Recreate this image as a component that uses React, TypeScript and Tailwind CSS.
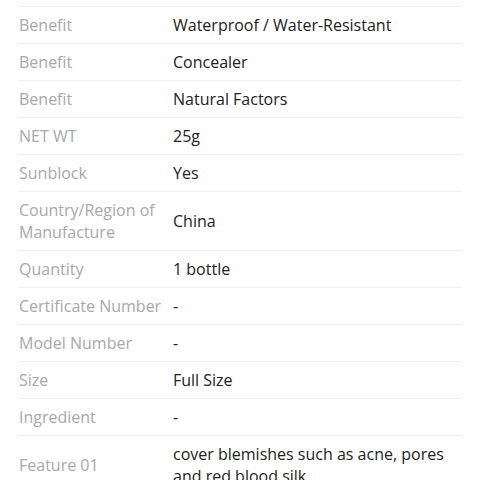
const specs: [string, string][] = [
  ["Benefit", "Waterproof / Water-Resistant"],
  ["Benefit", "Concealer"],
  ["Benefit", "Natural Factors"],
  ["NET WT", "25g"],
  ["Sunblock", "Yes"],
  ["Country/Region of Manufacture", "China"],
  ["Quantity", "1 bottle"],
  ["Certificate Number", "-"],
  ["Model Number", "-"],
  ["Size", "Full Size"],
  ["Ingredient", "-"],
  ["Feature 01", "cover blemishes such as acne, pores and red blood silk"],
];

export default function App() {
  return (
    <div className="h-[480px] overflow-hidden bg-white px-[18px] pt-[6px] font-['Open_Sans',sans-serif] text-[16px] leading-[22px]">
      <div className="border-t border-[#eeeeee]">
        {specs.map(([label, value], i) => (
          <div key={i} className="flex items-center border-b border-[#eeeeee] py-[7px]">
            <div className="w-[155px] shrink-0 pl-[1px] pr-2 text-[#a8a8a8]">{label}</div>
            <div className="flex-1 text-[#222222]">{value}</div>
          </div>
        ))}
      </div>
    </div>
  );
}
